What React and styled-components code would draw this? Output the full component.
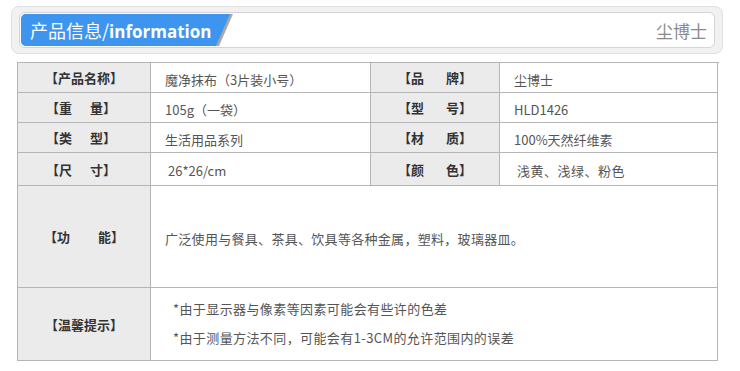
import React from "react"
import styled, { createGlobalStyle } from "styled-components"

const GlobalStyle = createGlobalStyle`
  body {
    margin: 0;
    background: #fff;
    font-family: "Noto Sans CJK SC", "Noto Sans", sans-serif;
  }
`

const Page = styled.div`
  width: 740px;
  height: 371px;
  padding-top: 6px;
  box-sizing: border-box;
`

const HeaderFrame = styled.div`
  margin-left: 11px;
  width: 712px;
  height: 48px;
  box-sizing: border-box;
  border: 1px solid #e0e0e0;
  border-radius: 8px;
  background: #f1f1f1;
  padding: 5px 7px 5px 7px;
`

const HeaderBar = styled.div`
  display: flex;
  align-items: center;
  justify-content: space-between;
  height: 36px;
  box-sizing: border-box;
  border: 1px solid #d4d4d4;
  border-radius: 6px;
  background: #fff;
  padding: 1px 7px 1px 1px;
`

const TabEdge = styled.div`
  width: 212px;
  height: 32px;
  background: #a8a8a8;
  border-radius: 5px 0 0 5px;
  clip-path: polygon(0 0, 212px 0, 198px 100%, 0 100%);
`

const TabFace = styled.div`
  height: 100%;
  background: #3d95ef;
  border-radius: 5px 0 0 5px;
  clip-path: polygon(0 0, 209px 0, 195px 100%, 0 100%);
  color: #fff;
  font-size: 18px;
  line-height: 32px;
  padding-left: 9px;
  white-space: nowrap;
  font-family: "Noto Sans CJK SC", sans-serif;

  b {
    font-family: "Open Sans", "Noto Sans", sans-serif;
    font-weight: 700;
    font-size: 17px;
  }
`

const Brand = styled.span`
  color: #8a8a8a;
  font-size: 17px;
`

const Table = styled.div`
  display: grid;
  grid-template-columns: 133px 220px 129px 218px;
  grid-template-rows: 30px 30px 30px 33px 102px 73px;
  width: 701px;
  margin: 8px 0 0 17px;
  border-top: 1px solid #b5b5b5;
  border-left: 1px solid #b5b5b5;
  box-sizing: content-box;
`

const Cell = styled.div`
  border-right: 1px solid #b5b5b5;
  border-bottom: 1px solid #b5b5b5;
  display: flex;
  align-items: center;
  grid-column: ${(p) => p.$span || "auto"};
`

const LabelCell = styled(Cell)`
  background: #ebebeb;
  justify-content: center;
  color: #333;
  font-weight: 700;
  font-size: 13px;
`

const Spread = styled.span`
  display: inline-flex;
  justify-content: space-between;
  width: ${(p) => p.$w}px;
  margin-left: ${(p) => p.$shift || 0}px;
`

const ValueCell = styled(Cell)`
  padding-left: ${(p) => p.$pad || 14}px;
  padding-top: 3px;
  color: #555;
  font-size: 13px;
  letter-spacing: ${(p) => p.$ls || 0}px;
`

const Notes = styled.div`
  display: flex;
  flex-direction: column;
  gap: 10px;
  padding-left: 22px;
  padding-bottom: 3px;
  color: #555;
  font-size: 13px;
  letter-spacing: 0.4px;
`

const Label = ({ a, b, w = 68, shift = 0 }) =>
  b ? (
    <Spread $w={w} $shift={shift}>
      <span>【{a}</span>
      <span>{b}】</span>
    </Spread>
  ) : (
    <span>【{a}】</span>
  )

export default function App() {
  return (
    <>
      <GlobalStyle />
      <Page>
        <HeaderFrame>
          <HeaderBar>
            <TabEdge>
              <TabFace>
                产品信息/<b>information</b>
              </TabFace>
            </TabEdge>
            <Brand>尘博士</Brand>
          </HeaderBar>
        </HeaderFrame>

        <Table>
          <LabelCell><Label a="产品名称" /></LabelCell>
          <ValueCell>魔净抹布（3片装小号）</ValueCell>
          <LabelCell><Label a="品" b="牌" w={74} /></LabelCell>
          <ValueCell>尘博士</ValueCell>

          <LabelCell><Label a="重" b="量" w={70} shift={-6} /></LabelCell>
          <ValueCell>105g（一袋）</ValueCell>
          <LabelCell><Label a="型" b="号" w={74} /></LabelCell>
          <ValueCell>HLD1426</ValueCell>

          <LabelCell><Label a="类" b="型" w={70} shift={-6} /></LabelCell>
          <ValueCell>生活用品系列</ValueCell>
          <LabelCell><Label a="材" b="质" w={74} /></LabelCell>
          <ValueCell>100%天然纤维素</ValueCell>

          <LabelCell><Label a="尺" b="寸" w={70} shift={-6} /></LabelCell>
          <ValueCell $pad={17}>26*26/cm</ValueCell>
          <LabelCell><Label a="颜" b="色" w={74} /></LabelCell>
          <ValueCell $pad={17} $ls={0.5}>浅黄、浅绿、粉色</ValueCell>

          <LabelCell><Label a="功" b="能" w={80} /></LabelCell>
          <ValueCell $span="2 / 5" $ls={0.3}>
            广泛使用与餐具、茶具、饮具等各种金属，塑料，玻璃器皿。
          </ValueCell>

          <LabelCell><Label a="温馨提示" /></LabelCell>
          <Cell $span="2 / 5">
            <Notes>
              <span>*由于显示器与像素等因素可能会有些许的色差</span>
              <span>*由于测量方法不同，可能会有1-3CM的允许范围内的误差</span>
            </Notes>
          </Cell>
        </Table>
      </Page>
    </>
  )
}
